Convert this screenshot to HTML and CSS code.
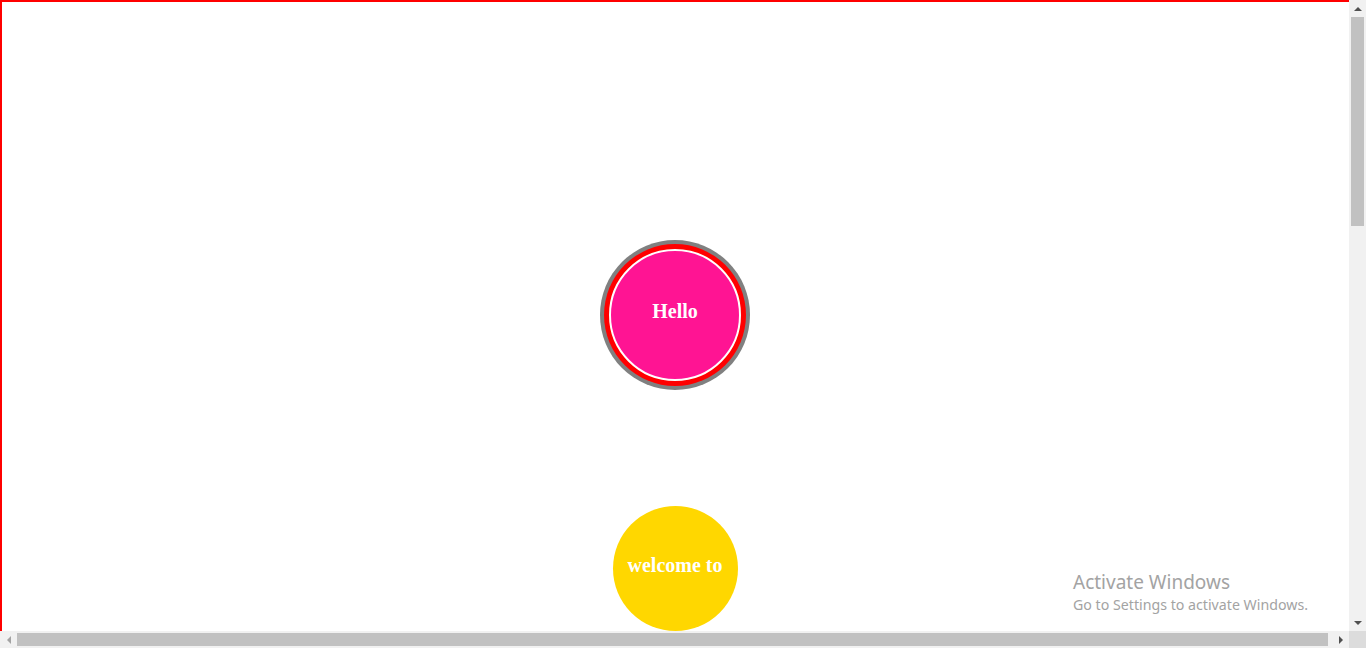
FILE: index.html
```html
<!DOCTYPE html>
<html>
<head>
<meta charset="utf-8">
<link rel="stylesheet" href="styles.css">
</head>
<body>
<div class="window">
  <main class="page">
    <div class="ring-gray">
      <div class="ring-red">
        <div class="bubble bubble-pink">Hello</div>
      </div>
    </div>
    <div class="bubble bubble-gold">welcome to</div>
    <div class="watermark">
      <div class="wm-title">Activate Windows</div>
      <div class="wm-sub">Go to Settings to activate Windows.</div>
    </div>
  </main>
  <div class="vscroll">
    <div class="arrow-box"><span class="tri tri-up"></span></div>
    <div class="vtrack"><div class="vthumb"></div></div>
    <div class="arrow-box"><span class="tri tri-down"></span></div>
  </div>
  <div class="hscroll">
    <div class="arrow-box"><span class="tri tri-left"></span></div>
    <div class="htrack"><div class="hthumb"></div></div>
    <div class="arrow-box"><span class="tri tri-right"></span></div>
  </div>
  <div class="corner"></div>
</div>
</body>
</html>
```

FILE: styles.css
```css
html, body {
  margin: 0;
  padding: 0;
  height: 100%;
  overflow: hidden;
}

.window {
  display: grid;
  grid-template-columns: 1349px 17px;
  grid-template-rows: 631px 17px;
  width: 1366px;
  height: 648px;
}

.page {
  position: relative;
  box-sizing: border-box;
  border-top: 2px solid #ff0000;
  border-left: 2px solid #ff0000;
  background: #ffffff;
  display: flex;
  flex-direction: column;
  align-items: center;
  padding-top: 238px;
  padding-right: 1px;
  overflow: hidden;
  font-family: "Liberation Serif", "Times New Roman", serif;
}

.ring-gray {
  width: 150px;
  height: 150px;
  box-sizing: border-box;
  border-radius: 50%;
  background: #808080;
  padding: 4px;
}

.ring-red {
  width: 142px;
  height: 142px;
  box-sizing: border-box;
  border-radius: 50%;
  background: #ff0000;
  padding: 5px;
}

.bubble {
  display: flex;
  align-items: center;
  justify-content: center;
  border-radius: 50%;
  color: #ffffff;
  font-weight: bold;
  font-size: 20px;
  box-sizing: border-box;
}

.bubble-pink {
  width: 132px;
  height: 132px;
  background: #ff1493;
  border: 2px solid #ffffff;
  padding-bottom: 7px;
}

.bubble-gold {
  width: 125px;
  height: 125px;
  background: #ffd700;
  margin-top: 116px;
  padding-bottom: 6px;
  flex-shrink: 0;
}

.watermark {
  position: absolute;
  left: 1071px;
  top: 567px;
  color: #a3a3a3;
  font-family: "Noto Sans", "Open Sans", sans-serif;
}

.wm-title {
  font-size: 19px;
  line-height: 26px;
}

.wm-sub {
  font-size: 14.2px;
  line-height: 20px;
}

.vscroll {
  background: #f1f1f1;
  display: flex;
  flex-direction: column;
}

.hscroll {
  background: #f1f1f1;
  display: flex;
}

.corner {
  background: #dcdcdc;
}

.arrow-box {
  width: 17px;
  height: 17px;
  flex-shrink: 0;
  display: flex;
  align-items: center;
  justify-content: center;
}

.vtrack {
  flex: 1;
  padding: 0 2px;
}

.vthumb {
  height: 209px;
  background: #c1c1c1;
}

.htrack {
  flex: 1;
  padding: 2px 0;
}

.hthumb {
  width: 1311px;
  height: 13px;
  background: #c1c1c1;
}

.tri {
  width: 0;
  height: 0;
  display: block;
}

.tri-up {
  border-left: 4px solid transparent;
  border-right: 4px solid transparent;
  border-bottom: 4px solid #505050;
}

.tri-down {
  border-left: 4px solid transparent;
  border-right: 4px solid transparent;
  border-top: 4px solid #505050;
}

.tri-left {
  border-top: 4px solid transparent;
  border-bottom: 4px solid transparent;
  border-right: 4px solid #a3a3a3;
}

.tri-right {
  border-top: 4px solid transparent;
  border-bottom: 4px solid transparent;
  border-left: 4px solid #505050;
}
```
